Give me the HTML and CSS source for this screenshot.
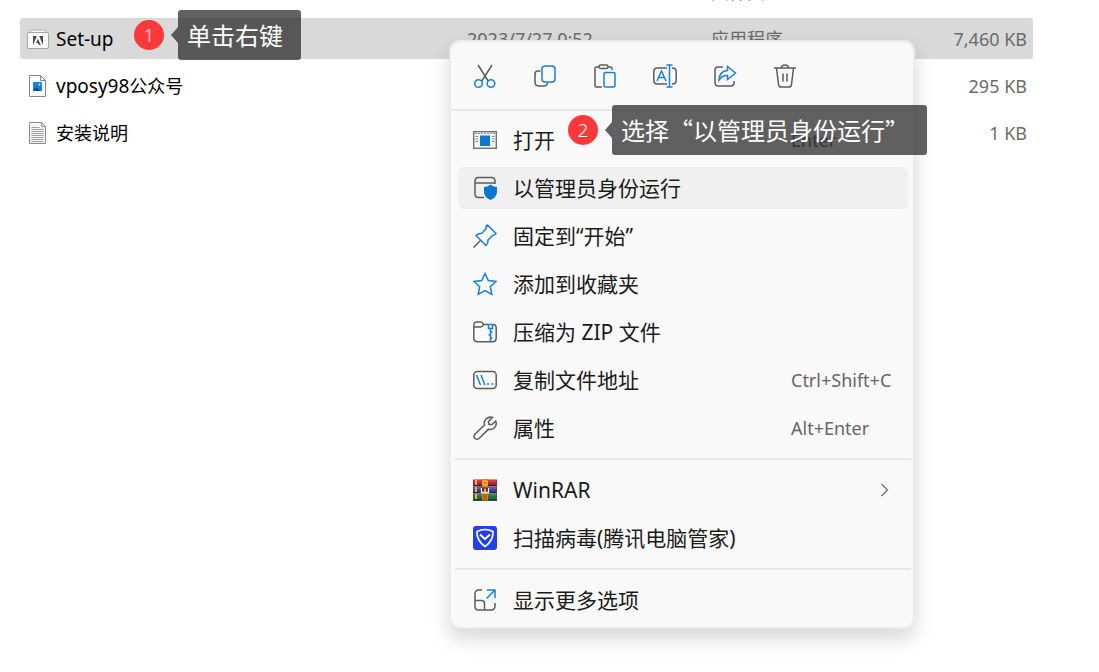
FILE: index.html
```html
<!DOCTYPE html>
<html lang="zh-CN">
<head>
<meta charset="utf-8">
<title>安装说明</title>
<link rel="stylesheet" href="styles.css">
</head>
<body>
<main class="explorer">
  <table class="files">
    <colgroup><col class="c-name"><col class="c-date"><col class="c-type"><col class="c-size"></colgroup>
    <tbody>
      <tr><td></td><td>2023/7/27 0:52</td><td>文件夹</td><td></td></tr>
      <tr class="selected">
        <td><span class="file">
          <svg class="file-icon" viewBox="0 0 22 22"><path d="M3.500 4.500V3q0-1 1-1h13q1 0 1 1v1.500" fill="#f7f7f7" stroke="#b0b0b0"/><rect x=".5" y="4.500" width="21" height="16" rx="1.500" fill="#fafafa" stroke="#a5a5a5"/><path d="M6 8h3.800L6 17zM12.200 8H16v9zM11 11l2.800 6h-1.900l-.8-2H9z" fill="#4a4a4a"/></svg>
          <span class="latin">Set-up</span></span></td>
        <td>2023/7/27 0:52</td><td>应用程序</td><td class="size">7,460 KB</td>
      </tr>
      <tr>
        <td><span class="file">
          <svg class="file-icon" viewBox="0 0 22 22"><path d="M2.500.5h11l5 5v16h-16z" fill="#fdfdfd" stroke="#858585"/><path d="M13.500.5v5h5" fill="none" stroke="#858585"/><rect x="6" y="7" width="9" height="9" rx="1" fill="#1780d8"/><path d="M6 15.500l3.500-3.500 4 4H7q-1 0-1-.5z" fill="#0b4f9c"/><circle cx="12.500" cy="9.500" r="1" fill="#d8efff"/></svg>
          <span><span class="latin">vposy98</span>公众号</span></span></td>
        <td></td><td></td><td class="size">295 KB</td>
      </tr>
      <tr>
        <td><span class="file">
          <svg class="file-icon" viewBox="0 0 22 22"><path d="M2.500.5h12l4 4v17h-16z" fill="#f6f6f6" stroke="#8a8a8a"/><path d="M14.500.5v4h4M4.500 5.500h8M4.500 7.500h12M4.500 9.500h12M4.500 11.500h12M4.500 13.500h12M4.500 15.500h12M4.500 17.500h12M4.500 19.500h12" fill="none" stroke="#a0a0a0"/></svg>
          <span>安装说明</span></span></td>
        <td></td><td></td><td class="size">1 KB</td>
      </tr>
    </tbody>
  </table>

  <div class="menu" role="menu">
    <div class="toolbar">
      <button aria-label="剪切"><svg class="icon" viewBox="0 0 24 24"><path d="M5 1l10.500 16.500M19 1L8.500 17.500" class="g"/><circle cx="5.500" cy="19.500" r="3.800" class="b"/><circle cx="18" cy="19.500" r="3.800" class="b"/></svg></button>
      <button aria-label="复制"><svg class="icon" viewBox="0 0 24 24"><path d="M7.500 7H5q-3 0-3 3v8q0 4 4 4h5q3 0 3.500-3" class="g"/><rect x="9" y="2" width="13" height="16" rx="3" class="b"/></svg></button>
      <button aria-label="粘贴"><svg class="icon" viewBox="0 0 24 24"><path d="M6 3H3.500Q2 3 2 4.500v17Q2 23 3.500 23H9M15 3h2.500Q19 3 19 4.500V6" class="g"/><rect x="6" y="1" width="9" height="3.500" rx="1.700" class="g"/><rect x="11" y="8.500" width="11" height="14.500" rx="1.500" class="b"/></svg></button>
      <button aria-label="重命名"><svg class="icon" viewBox="0 0 24 24"><path d="M14 4H4.500Q.8 4 .8 7.500v9q0 3.500 3.700 3.500H14M19 4q4.200 0 4.200 3.500v9q0 3.500-4.200 3.500" class="g"/><path d="M4 17L8.500 7 13 17M5.500 13.500h6M13.500 1h6M13.500 23h6M16.500 1v22" class="b"/></svg></button>
      <button aria-label="共享"><svg class="icon" viewBox="0 0 24 24"><path d="M10 3H5Q2 3 2 6v12.500q0 3.500 3.500 3.500h12q3.500 0 3.500-3.500V17" class="g"/><path d="M14.500 2.500L22.500 9l-8 6.500v-4q-5-.5-8.500 4.500.5-9 8.500-9.500z" class="b"/></svg></button>
      <button aria-label="删除"><svg class="icon" viewBox="0 0 24 24"><path d="M1 4h22M8.500 4q0-3 3.500-3t3.500 3M3.500 4l2 16.500Q6 23 8 23h8q2 0 2.500-2.500l2-16.500M10 9.500v8M14 9.500v8" class="g"/></svg></button>
    </div>
    <div class="group">
      <button class="item" role="menuitem"><svg class="icon" viewBox="0 0 24 24"><rect x=".7" y="3.700" width="22.600" height="16.600" fill="#f4f4f4" stroke="#707070" stroke-width="1.400"/><path d="M2 5.500h20" stroke="#909090" stroke-dasharray="2 1"/><rect x="7" y="7.500" width="10" height="10.500" fill="#0f78ca"/><path d="M2.500 8.500h2.500M2.500 11h2.500M2.500 13.500h2.500M19 8.500h2.500M19 11h2.500M19 13.500h2.500" stroke="#8a8a8a"/></svg><span>打开</span><kbd>Enter</kbd></button>
      <button class="item active" role="menuitem"><svg class="icon" viewBox="0 0 24 24"><path d="M11 21.500H5.500Q2 21.500 2 18V5q0-3.500 3.500-3.500h13Q22 1.500 22 5v3M2 7h20" class="g"/><path d="M17.500 8.500q3 2.500 6.500 2.500v5q0 5-6.500 8-6.500-3-6.500-8v-5q3.500 0 6.500-2.500z" fill="#0877d4"/></svg><span>以管理员身份运行</span></button>
      <button class="item" role="menuitem"><svg class="icon" viewBox="0 0 24 24"><path d="M.5 23.500L7.500 16.500" class="g"/><path d="M14.500 1L23 9.500q-1 2-3.500 2L15 16q.5 3-2 5.500L3 11.500Q5.500 9 8.500 9.500L13 5q-.5-3 1.500-4z" class="b"/></svg><span>固定到“开始”</span></button>
      <button class="item" role="menuitem"><svg class="icon" viewBox="0 0 24 24"><path d="M12 1.500l3.300 7 7.700 1-5.700 5.200 1.500 7.600-6.800-3.700-6.800 3.700 1.500-7.600L1 9.500l7.700-1z" class="b"/></svg><span>添加到收藏夹</span></button>
      <button class="item" role="menuitem"><svg class="icon" viewBox="0 0 24 24"><path d="M15 4.500h-4.500Q9.500 2 8 2H4Q.8 2 .8 5v13q0 3.800 3.700 3.800h15q3.700 0 3.700-3.800V8q0-3.500-3.200-3.500M1 7h6.500q2 0 3-2.500" class="g"/><path d="M15.500 4.500h4v4h-4zM17.500 8.500v13.500M17.500 12h2M15.500 15h2M17.500 18h2" class="b"/></svg><span>压缩为 ZIP 文件</span></button>
      <button class="item" role="menuitem"><svg class="icon" viewBox="0 0 24 24"><rect x=".8" y="3.500" width="22.400" height="17" rx="3.500" class="g"/><path d="M3.500 7l4 10M8 7l4 10M14 16h2M18.500 16h2" class="b"/></svg><span>复制文件地址</span><kbd>Ctrl+Shift+C</kbd></button>
      <button class="item" role="menuitem"><svg class="icon" viewBox="0 0 24 24"><path d="M19.500 1.500L15.500 5.500 16 8.500 19 8.500 22.700 5q1.500 4-1.200 6.700-2.600 2.400-6 1.500L6 22.500q-2 1.500-4 0t0-4.500L11.500 9Q10.500 5.500 13 3q3-2.700 6.500-1.500z" class="g"/></svg><span>属性</span><kbd>Alt+Enter</kbd></button>
    </div>
    <div class="group">
      <button class="item" role="menuitem"><svg class="icon" viewBox="0 0 24 24"><path fill="#c02234" d="M0 1.500h24v6H0z"/><path fill="#4c3a9e" d="M0 8.500h24v6H0z"/><path fill="#14783a" d="M0 15.500h24v7H0z"/><path d="M0 7.500h24M0 14.500h24M0 22h24" stroke="#311d28" stroke-width="1.500"/><path d="M1 3h22" stroke="#e2596a"/><path d="M1 10h22" stroke="#7c74c8"/><path d="M1 17h22" stroke="#42a05b"/><path d="M3 2v5M3 9v5M3 16v5" stroke="#e6b34a" stroke-width="2"/><path fill="#d88216" d="M9 1h6v21.500H9z"/><path d="M10 3h4v4h-4z" fill="none" stroke="#ffc33d"/><path d="M8 9.500h8V15H8z" fill="#4a2a20"/><path d="M8.500 10v4.500h7V10M12 10.500v4" fill="none" stroke="#fff2dc" stroke-width="1.300"/><path d="M10 16.500h4V22h-4z" fill="#c45a15"/></svg><span>WinRAR</span><svg class="chevron" viewBox="0 0 8 14"><path d="M1 1l6 6-6 6"/></svg></button>
      <button class="item" role="menuitem"><svg class="icon" viewBox="0 0 24 24"><rect width="24" height="24" rx="3" fill="#2340ea"/><path d="M12 3.500q4 0 8 2 .5 9-8 15-8.500-6-8-15 4-2 8-2z" fill="none" stroke="#fff" stroke-width="1.700" stroke-linejoin="round"/><path d="M7 8.500l5 4.500 5-4.500" fill="none" stroke="#fff" stroke-width="1.900"/></svg><span>扫描病毒(腾讯电脑管家)</span></button>
    </div>
    <div class="group">
      <button class="item" role="menuitem"><svg class="icon" viewBox="0 0 24 24"><path d="M9 2H6Q2 2 2 6v12.500Q2 22 5.500 22H18q4 0 4-4v-3M2 12.500h6.500q3 0 3 3V22" class="g"/><path d="M14 2h8v8M22 2l-8.500 8.500" class="b"/></svg><span>显示更多选项</span></button>
    </div>
  </div>

  <div class="step step-one"><span class="badge">1</span><span class="tip">单击右键</span></div>
  <div class="step step-two"><span class="badge">2</span><span class="tip">选择“以管理员身份运行”</span></div>
</main>
</body>
</html>
```

FILE: styles.css
```css
* { box-sizing: border-box; }

body {
  margin: 0;
  background: #fff;
  color: #000;
  font: 18px/24px "Noto Sans", "Noto Sans CJK SC", sans-serif;
}

.explorer {
  position: relative;
  min-height: 100vh;
  overflow: hidden;
}

.files {
  width: calc(100% - 86px);
  margin: -35px 66px 0 20px;
  table-layout: fixed;
  border-collapse: separate;
  border-spacing: 0 6px;
}
.c-date { width: 244px; }
.c-type { width: 212px; }
.c-size { width: 110px; }
.files td {
  height: 41px;
  padding: 0;
  color: #6b6b6b;
  white-space: nowrap;
}
.files td:first-child { padding-left: 7px; color: #000; border-radius: 2px 0 0 2px; }
.files td:last-child { padding-right: 6px; border-radius: 0 2px 2px 0; }
.selected td { background: #d9d9d9; }
.files .size { text-align: right; }
.file { display: flex; align-items: center; gap: 7px; }
.file-icon { width: 22px; height: 22px; flex: none; }
.latin { font-size: 19px; }

.menu {
  position: absolute;
  left: 449px;
  top: 40px;
  width: 466px;
  border: 2px solid #ebebeb;
  border-radius: 11px;
  background: #f9f9f9;
  background-clip: padding-box;
  box-shadow: 0 10px 20px rgba(0, 0, 0, .16);
}
.menu button {
  border: 0;
  background: none;
  color: #1b1b1b;
  font: inherit;
}
.toolbar {
  display: flex;
  gap: 18px;
  padding: 13px 13px 12px;
}
.toolbar button {
  display: grid;
  place-items: center;
  width: 42px;
  height: 42px;
  padding: 0;
}
.icon { width: 24px; height: 24px; }
.g, .b { fill: none; stroke: #5c5c5c; stroke-width: 1.5; }
.b { stroke: #1681da; }

.group {
  display: grid;
  gap: 6px;
  padding: 8px 5px 9px 7px;
  border-top: 2px solid #e8e8e8;
}
.group + .group { margin: 0 2px 0 4px; padding: 9px 3px; }
.group:last-child { padding-bottom: 6px; }
.menu .item {
  display: grid;
  grid-template-columns: 24px 1fr 102px;
  column-gap: 16px;
  align-items: center;
  height: 42px;
  padding: 0 15px;
  border-radius: 6px;
  font-size: 21px;
  text-align: left;
  white-space: nowrap;
}
.menu .active { background: #f0f0f0; }
.item kbd { font: inherit; font-size: 18px; color: #666; }
.chevron {
  width: 9px;
  height: 14px;
  margin-right: 4px;
  justify-self: end;
  fill: none;
  stroke: #6b6b6b;
  stroke-width: 1.2;
}

.step {
  position: absolute;
  display: flex;
  align-items: center;
  gap: 14px;
}
.step-one { left: 134px; top: 10px; }
.step-two { left: 568px; top: 105px; }
.badge {
  width: 30px;
  height: 30px;
  border-radius: 50%;
  background: #fc3838;
  color: #fff;
  font-size: 19px;
  font-weight: 300;
  line-height: 30px;
  text-align: center;
}
.tip {
  position: relative;
  padding: 0 18px 0 9px;
  border-radius: 3px;
  background: rgba(31, 31, 31, .7);
  color: #fff;
  font-family: "Noto Sans CJK SC", sans-serif;
  font-size: 24px;
  line-height: 50px;
  white-space: nowrap;
}
.tip::before {
  content: "";
  position: absolute;
  right: 100%;
  top: 17px;
  border: solid transparent;
  border-width: 8px 7px 8px 0;
  border-right-color: rgba(31, 31, 31, .7);
}
```
